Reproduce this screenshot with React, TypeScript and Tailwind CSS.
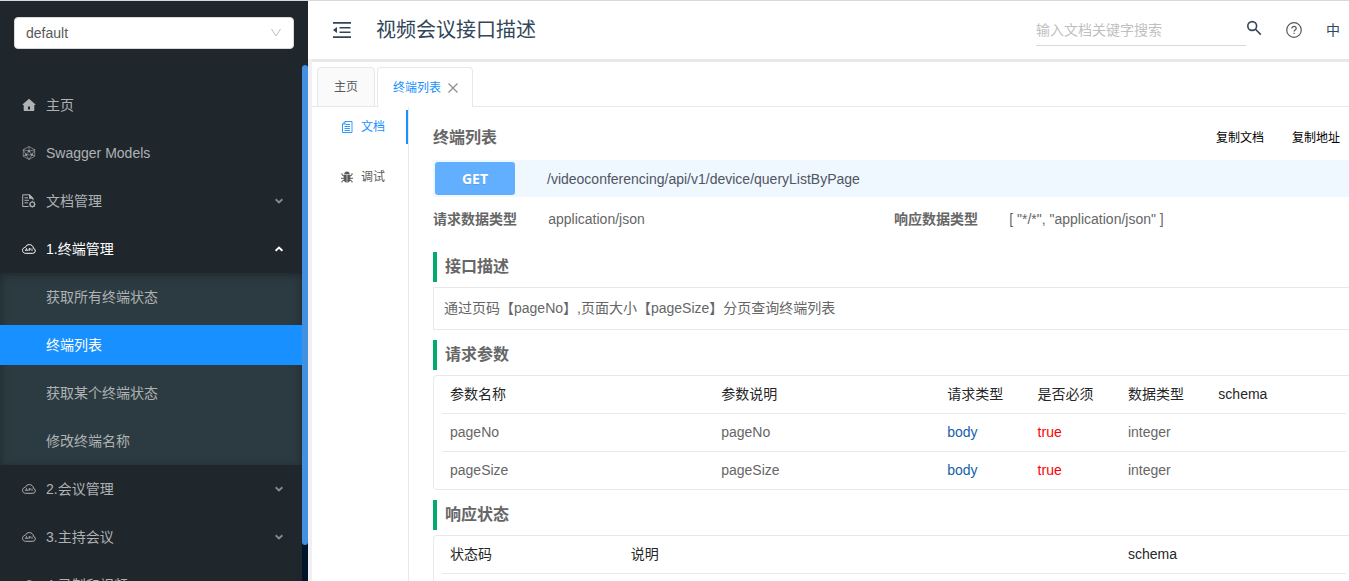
import React, { useState } from 'react';

type IconName = 'home' | 'models' | 'docs' | 'cloud';

interface MenuEntry {
  key: string;
  label: string;
  icon: IconName;
  children?: string[];
  group?: boolean;
}

const menu: MenuEntry[] = [
  { key: 'home', label: '主页', icon: 'home' },
  { key: 'models', label: 'Swagger Models', icon: 'models' },
  { key: 'docs', label: '文档管理', icon: 'docs', group: true },
  {
    key: 'device',
    label: '1.终端管理',
    icon: 'cloud',
    group: true,
    children: ['获取所有终端状态', '终端列表', '获取某个终端状态', '修改终端名称'],
  },
  { key: 'meeting', label: '2.会议管理', icon: 'cloud', group: true },
  { key: 'host', label: '3.主持会议', icon: 'cloud', group: true },
  { key: 'record', label: '4.录制和视频', icon: 'cloud', group: true },
];

const params = [
  { name: 'pageNo', desc: 'pageNo', in: 'body', required: 'true', type: 'integer' },
  { name: 'pageSize', desc: 'pageSize', in: 'body', required: 'true', type: 'integer' },
];

function MenuIcon({ name }: { name: IconName }) {
  if (name === 'home') {
    return (
      <svg className="h-3.5 w-3.5" viewBox="0 0 14 14" fill="currentColor">
        <path
          fillRule="evenodd"
          d="M7 .8 13.3 6.2c.3.3.1.8-.3.8h-.7v5c0 .6-.4 1-1 1H2.7c-.6 0-1-.4-1-1V7H1c-.4 0-.6-.5-.3-.8L7 .8ZM6 8.500v3h2v-3H6Z"
        />
      </svg>
    );
  }
  if (name === 'models') {
    return (
      <svg className="h-3.5 w-3.5" viewBox="0 0 14 14" fill="none" stroke="currentColor" strokeWidth="0.6">
        <path d="M7 .5 12.700 3.700v6.600L7 13.500 1.300 10.300V3.700L7 .5Z" />
        <path d="M1.300 3.700 7 5.200l5.700-1.500M7 .5v4.700M4 8.800 1.300 10.300M10 8.800l2.700 1.500M7 13.500 4 8.800 7 5.200l3 3.600-3 4.700M4 8.800h6M1.300 3.700 4 8.800M12.700 3.700 10 8.800" />
        <path d="M6.300 4.500h1.400v1.400H6.300zM3.300 8h1.400v1.400H3.300zM9.300 8h1.400v1.400H9.300z" />
      </svg>
    );
  }
  if (name === 'docs') {
    return (
      <svg className="h-3.5 w-3.5" viewBox="0 0 14 14" fill="none" stroke="currentColor">
        <path d="M6.500 12.500H.7V.8h7L11 4.300v2" />
        <path d="M7.500 .8v3.500H11Z" fill="currentColor" />
        <path d="M2.500 3.800h3.500M2.500 6.300h4.500M2.500 8.800H6" />
        <circle cx="10.300" cy="10.300" r="2.300" strokeWidth="1.200" />
        <path d="M10.300 7v1M10.300 12.500v1M7 10.300h1M12.500 10.300h1M8 8l.7.700M12 12l.7.700M12.600 8l-.7.700M8 12.600l.7-.7" />
      </svg>
    );
  }
  return (
    <svg className="h-3.5 w-3.5" viewBox="0 0 14 14" fill="none" stroke="currentColor">
      <path d="M3.500 11.300h7.200a2.500 2.500 0 0 0 .8-4.900C11.300 4 9.400 2.600 7.300 2.600c-1.900 0-3.300 1-3.900 2.700C1.600 5.500.5 6.800.5 8.300c0 1.700 1.300 3 3 3Z" />
      <path d="m3.300 9 1.200-2.600L5.600 9M4 8.200h1.200M7 9V6.600h1.300v1.200H7M10 6.500V9" strokeWidth="0.8" />
    </svg>
  );
}

function Caret({ open }: { open: boolean }) {
  return (
    <svg
      className={open ? 'h-2 w-2' : 'h-2 w-2 text-[#868a8d]'}
      viewBox="0 0 8 8"
      fill="none"
      stroke="currentColor"
      strokeWidth="2"
    >
      <path d={open ? 'M.6 5.800 4 2.600l3.400 3.200' : 'M.6 2.300 4 5.500l3.400-3.200'} />
    </svg>
  );
}

function Sidebar() {
  const [openKey, setOpenKey] = useState('device');
  const [selected, setSelected] = useState('终端列表');

  return (
    <aside className="flex w-[308px] shrink-0 flex-col bg-[#1f272c]">
      <div className="relative mx-3.5 mt-4">
        <select
          aria-label="分组"
          className="h-8 w-full appearance-none rounded border border-[#d9d9d9] bg-white px-[11px] text-sm text-[#595959]"
        >
          <option>default</option>
        </select>
        <svg
          className="pointer-events-none absolute right-3 top-[11px] h-2.5 w-3"
          viewBox="0 0 12 10"
          fill="none"
          stroke="#bfbfbf"
        >
          <path d="M1.500 1 6 8l4.500-7" />
        </svg>
      </div>
      <div className="mt-4 flex min-h-0 flex-1">
        <nav className="min-w-0 flex-1 overflow-hidden pt-4 text-sm text-[#afb2b4]">
          {menu.map((item) => {
            const open = openKey === item.key;
            return (
              <div key={item.key}>
                <button
                  onClick={() => setOpenKey(open ? '' : item.key)}
                  className={`flex h-12 w-full items-center pl-[22px] pr-[19px] text-left hover:text-white ${
                    open ? 'text-white' : ''
                  }`}
                >
                  <MenuIcon name={item.icon} />
                  <span className="ml-2.5 flex-1">{item.label}</span>
                  {item.group && <Caret open={open} />}
                </button>
                {open && item.children && (
                  <div className="bg-[#2c3b41] py-1 shadow-[inset_0_2px_8px_rgba(0,0,0,0.35)]">
                    <div className="flex flex-col gap-2">
                      {item.children.map((child) => (
                        <button
                          key={child}
                          onClick={() => setSelected(child)}
                          className={`h-10 w-full pl-[46px] text-left ${
                            selected === child ? 'bg-[#1890ff] text-white' : 'hover:text-white'
                          }`}
                        >
                          {child}
                        </button>
                      ))}
                    </div>
                  </div>
                )}
              </div>
            );
          })}
        </nav>
        <div className="w-1.5 bg-[#001529]">
          <div className="h-[93%] rounded-full bg-[#4390e1]" />
        </div>
      </div>
    </aside>
  );
}

function Header() {
  return (
    <header className="flex h-[58px] shrink-0 items-center bg-white pl-6 pr-[9px] text-[#314659]">
      <button aria-label="收起菜单" className="p-px">
        <svg className="h-[18px] w-[18px]" viewBox="0 0 18 18" fill="currentColor">
          <path d="M0 1h18v1.800H0zM6.500 6h11v1.600h-11zM6.500 10.400h11V12h-11zM0 15.200h18V17H0zM0 9l4-3v6z" />
        </svg>
      </button>
      <h1 className="ml-6 text-xl">视频会议接口描述</h1>
      <div className="ml-auto flex items-center">
        <input
          aria-label="搜索"
          placeholder="输入文档关键字搜索"
          className="h-8 w-[210px] border-b border-[#d9d9d9] bg-transparent text-sm outline-none placeholder:text-[#bfbfbf]"
        />
        <button aria-label="搜索文档" className="mb-1">
          <svg className="h-4 w-4" viewBox="0 0 16 16" fill="none" stroke="currentColor" strokeWidth="1.600">
            <circle cx="6.200" cy="6" r="4.400" />
            <path d="m9.500 9.300 5.300 5.300" />
          </svg>
        </button>
        <button aria-label="帮助" className="ml-6 text-[#595959]">
          <svg className="h-4 w-4" viewBox="0 0 16 16" fill="none" stroke="currentColor" strokeWidth="1.200">
            <circle cx="8" cy="8" r="7.300" />
            <path d="M5.800 6.500c0-1.300 1-2.100 2.200-2.100s2.200.8 2.200 2c0 1.500-2.200 1.600-2.200 3.200" />
            <path d="M8 10.800v1.300" />
          </svg>
        </button>
        <button className="ml-6 text-sm">中</button>
      </div>
    </header>
  );
}

function TabBar() {
  return (
    <div className="flex h-[45px] items-end gap-0.5 pl-[5px] text-xs shadow-[inset_0_-1px_0_#e8e8e8]">
      <button className="h-10 rounded-t border border-[#e8e8e8] bg-[#fafafa] px-4 text-[#595959]">主页</button>
      <div className="flex h-10 items-center rounded-t border border-b-0 border-[#e8e8e8] bg-white px-[13px] pl-[15px] text-[#1890ff]">
        <button>终端列表</button>
        <button aria-label="关闭" className="ml-1.5 text-[#8c8c8c]">
          <svg className="h-3 w-3" viewBox="0 0 12 12" fill="none" stroke="currentColor" strokeWidth="1.200">
            <path d="m1.500 1.500 9 9M10.500 1.500l-9 9" />
          </svg>
        </button>
      </div>
    </div>
  );
}

function SideTabs() {
  return (
    <div className="flex w-[97px] shrink-0 flex-col gap-4 border-r border-[#e8e8e8] pt-[3px] text-xs">
      <button className="flex h-[34px] items-center justify-end gap-2 border-r-2 border-[#1890ff] pr-[21px] text-[#1890ff]">
        <svg className="h-3 w-3" viewBox="0 0 12 12" fill="none" stroke="currentColor" strokeWidth="0.9">
          <path d="M4 .5h7v11H1.500V3L4 .5ZM1.500 3H4V.5M4.500 3.500h4.500M3.500 5.500H9M3.500 7.500H9M3.500 9.500H9" />
        </svg>
        文档
      </button>
      <button className="flex h-[34px] items-center justify-end gap-2 border-r-2 border-transparent pr-[21px] text-[#595959]">
        <svg className="h-3 w-3" viewBox="0 0 12 12" fill="none" stroke="currentColor">
          <path d="M3.300 3.200a2.700 2.700 0 0 1 5.400 0Z" fill="currentColor" stroke="none" />
          <path
            d="M2.700 3.800h3v8C3.900 11.500 2.700 10.200 2.700 8.600V3.800ZM6.300 3.800h3v4.800c0 1.600-1.200 2.900-3 3.200v-8Z"
            fill="currentColor"
            stroke="none"
          />
          <path d="M3 5 1 4V2.200M9 5l2-1V2.200M0 7.300h3M9 7.300h3M3 9.300l-2 .8v1.500M9 9.300l2 .8v1.500" />
        </svg>
        调试
      </button>
    </div>
  );
}

function SectionTitle({ children }: { children: React.ReactNode }) {
  return (
    <h3 className="mb-[5px] mt-2.5 border-l-4 border-[#00ab6d] pl-2 text-base font-semibold leading-[30px] text-[#666666]">
      {children}
    </h3>
  );
}

function Th({ children, width }: { children: React.ReactNode; width: string }) {
  return (
    <th className={`${width} border-b border-[#e8e8e8] px-2 text-left font-normal leading-[37px] text-[#262626]`}>
      {children}
    </th>
  );
}

function Td({ children, className = '' }: { children?: React.ReactNode; className?: string }) {
  return (
    <td className={`border-b border-[#e8e8e8] px-2 leading-[37px] group-last:border-b-0 ${className}`}>{children}</td>
  );
}

function ApiDoc() {
  return (
    <main className="-mr-1.5 min-w-0 flex-1 pl-6 text-sm text-[#666666]">
      <div className="flex h-[53px] items-center pt-2">
        <h2 className="flex-1 text-base font-semibold text-[#666666]">终端列表</h2>
        <div className="mr-[15px] flex gap-7 text-xs text-black">
          <button>复制文档</button>
          <button>复制地址</button>
        </div>
      </div>

      <div className="flex items-center bg-[#eff7ff] p-0.5">
        <span className="w-20 rounded-[3px] bg-[#61affe] text-center font-['Open_Sans',sans-serif] font-bold leading-[33px] text-white [text-shadow:0_1px_0_rgba(0,0,0,0.1)]">
          GET
        </span>
        <span className="ml-8 leading-8 text-[#50555f]">/videoconferencing/api/v1/device/queryListByPage</span>
      </div>

      <dl className="grid grid-cols-2 leading-[45px]">
        <div className="flex">
          <dt className="w-1/4 font-semibold text-[#666666]">请求数据类型</dt>
          <dd>application/json</dd>
        </div>
        <div className="flex">
          <dt className="w-1/4 font-semibold text-[#666666]">响应数据类型</dt>
          <dd>{'[ "*/*", "application/json" ]'}</dd>
        </div>
      </dl>

      <SectionTitle>接口描述</SectionTitle>
      <p className="border border-[#e8e8e8] px-2.5 leading-[41px]">
        通过页码【pageNo】,页面大小【pageSize】分页查询终端列表
      </p>

      <SectionTitle>请求参数</SectionTitle>
      <div className="rounded border border-[#e8e8e8] px-2">
        <table className="w-full table-fixed border-separate border-spacing-0">
          <thead>
            <tr>
              <Th width="w-[30%]">参数名称</Th>
              <Th width="w-[25%]">参数说明</Th>
              <Th width="w-[10%]">请求类型</Th>
              <Th width="w-[10%]">是否必须</Th>
              <Th width="w-[10%]">数据类型</Th>
              <Th width="w-[15%]">schema</Th>
            </tr>
          </thead>
          <tbody>
            {params.map((p) => (
              <tr key={p.name} className="group">
                <Td>{p.name}</Td>
                <Td>{p.desc}</Td>
                <Td className="text-[#1661ab]">{p.in}</Td>
                <Td className="text-[#ff0000]">{p.required}</Td>
                <Td>{p.type}</Td>
                <Td />
              </tr>
            ))}
          </tbody>
        </table>
      </div>

      <SectionTitle>响应状态</SectionTitle>
      <div className="rounded-t border border-b-0 border-[#e8e8e8] px-2 pb-10">
        <table className="w-full table-fixed border-separate border-spacing-0">
          <thead>
            <tr>
              <Th width="w-[20%]">状态码</Th>
              <Th width="w-[55%]">说明</Th>
              <Th width="w-[25%]">schema</Th>
            </tr>
          </thead>
        </table>
      </div>
    </main>
  );
}

export default function App() {
  return (
    <div className="flex h-screen overflow-hidden border-t border-[#d9d9dd] bg-white font-['Liberation_Sans','Noto_Sans_CJK_SC',sans-serif]">
      <Sidebar />
      <div className="flex min-w-0 flex-1 flex-col bg-[#f0f0f4]">
        <Header />
        <div className="ml-1 flex min-h-0 flex-1 flex-col border-t-[3px] border-[#e6e8ea] bg-white">
          <TabBar />
          <div className="flex min-h-0 flex-1 overflow-hidden">
            <SideTabs />
            <ApiDoc />
          </div>
        </div>
      </div>
    </div>
  );
}
